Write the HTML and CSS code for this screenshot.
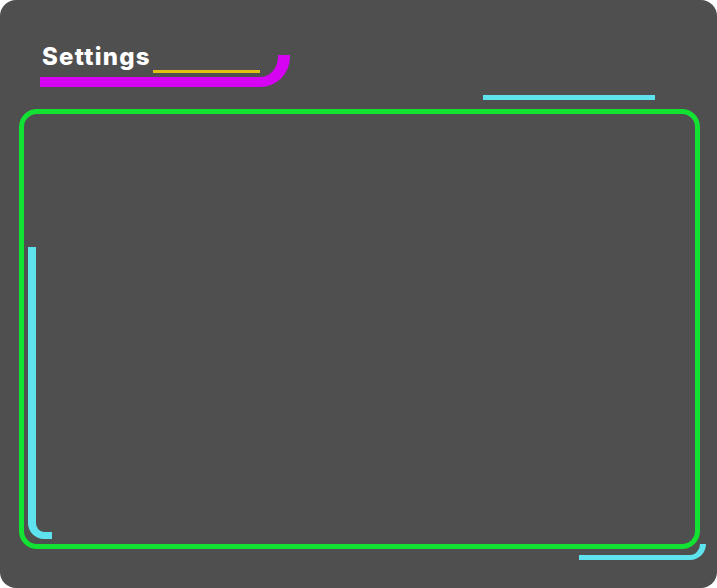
FILE: index.html
```html
<!DOCTYPE html>
<html>
<head>
<meta charset="utf-8">
<title>Settings</title>
<link rel="stylesheet" href="styles.css">
</head>
<body>
<div class="panel">
  <header class="header">
    <h1 class="title">Settings</h1>
    <span class="deco deco-magenta"></span>
    <span class="deco deco-yellow"></span>
    <span class="deco deco-cyan-top"></span>
  </header>
  <section class="frame"></section>
  <span class="deco deco-cyan-left"></span>
  <span class="deco deco-cyan-bottom"></span>
</div>
</body>
</html>
```
FILE: styles.css
```css
html, body {
  margin: 0;
  padding: 0;
  background: #ffffff;
}
.panel {
  position: relative;
  width: 717px;
  height: 588px;
  background: #4f4f4f;
  border-radius: 16px;
  overflow: hidden;
}
.header {
  height: 109px;
  box-sizing: border-box;
  padding: 44px 0 0 42px;
}
.title {
  position: relative;
  z-index: 2;
  margin: 0;
  font-family: Inter, "Noto Sans", sans-serif;
  font-weight: 800;
  font-size: 24px;
  line-height: 26px;
  letter-spacing: 1.25px;
  color: #ffffff;
}
.frame {
  margin-left: 19px;
  width: 681px;
  height: 440px;
  box-sizing: border-box;
  border: 5px solid #12e232;
  border-radius: 18px;
}
.deco {
  position: absolute;
  box-sizing: border-box;
  display: block;
}
.deco-magenta {
  left: 40px;
  top: 55px;
  width: 250px;
  height: 32px;
  border-right: 12px solid #d602f2;
  border-bottom: 10px solid #d602f2;
  border-bottom-right-radius: 30px;
}
.deco-yellow {
  left: 153px;
  top: 70px;
  width: 107px;
  height: 3px;
  background: #e2c110;
}
.deco-cyan-top {
  left: 483px;
  top: 95px;
  width: 172px;
  height: 5px;
  background: #5ee3ee;
}
.deco-cyan-left {
  left: 28px;
  top: 247px;
  width: 24px;
  height: 292px;
  border-left: 8px solid #5ee3ee;
  border-bottom: 7px solid #5ee3ee;
  border-bottom-left-radius: 16px;
}
.deco-cyan-bottom {
  left: 579px;
  top: 544px;
  width: 127px;
  height: 16px;
  border-right: 6px solid #5ee3ee;
  border-bottom: 5px solid #5ee3ee;
  border-bottom-right-radius: 16px;
}
```
